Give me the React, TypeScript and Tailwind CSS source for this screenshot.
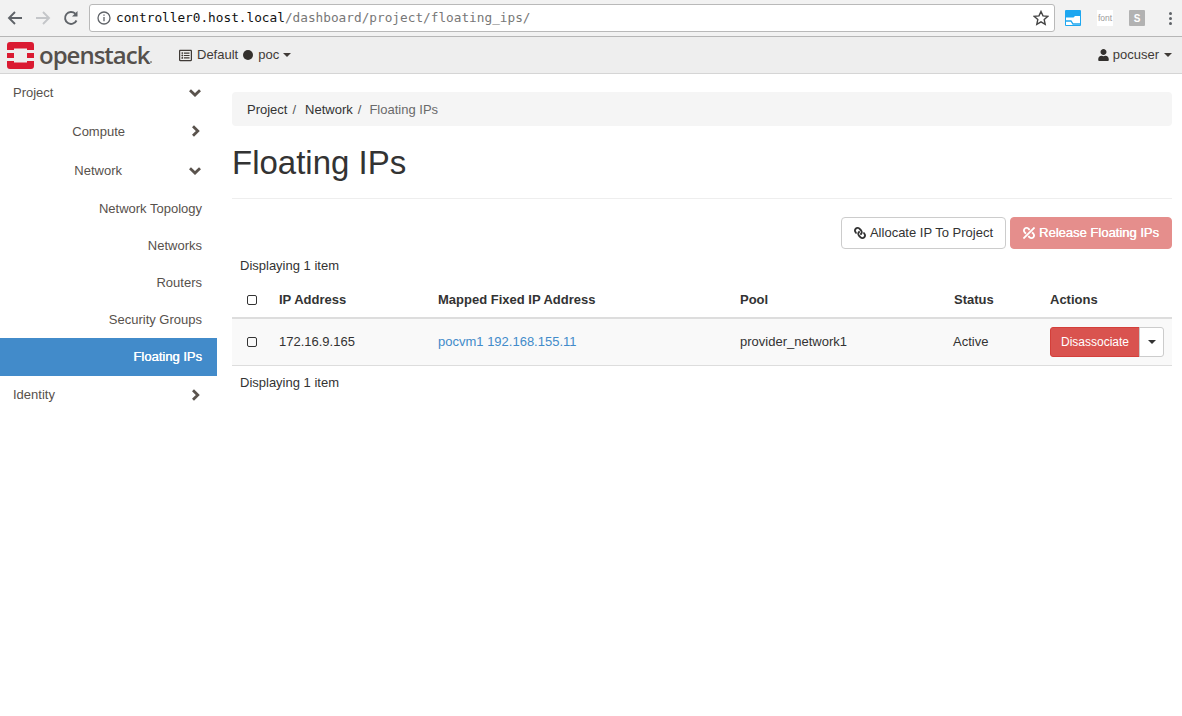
import React from "react";
import { FaLink, FaUnlink, FaUser, FaRegListAlt } from "react-icons/fa";

const sans = "font-['Liberation_Sans',Arial,sans-serif]";

function Caret({ className = "" }: { className?: string }) {
  return (
    <svg width="8" height="4" viewBox="0 0 8 4" className={className}>
      <path d="M0 0h8L4 4z" fill="currentColor" />
    </svg>
  );
}

function ChevronDown({ className = "" }: { className?: string }) {
  return (
    <svg width="14" height="14" viewBox="0 0 14 14" className={`text-[#5a534d] ${className}`}>
      <path d="M2 4.200 7 9l5-4.800" fill="none" stroke="currentColor" strokeWidth="2.800" />
    </svg>
  );
}

function ChevronRight({ className = "" }: { className?: string }) {
  return (
    <svg width="14" height="14" viewBox="0 0 14 14" className={`text-[#5a534d] ${className}`}>
      <path d="M5 2.200 9.800 7 5 11.800" fill="none" stroke="currentColor" strokeWidth="2.800" />
    </svg>
  );
}

function NavRow({ label, active }: { label: string; active?: boolean }) {
  return (
    <div
      className={`flex items-center justify-end pr-[15px] text-right text-[13px] ${
        active ? "h-[38px] bg-[#428bca] text-white [text-shadow:0.3px_0_0_#fff]" : "h-[37px] text-[#57514c]"
      }`}
    >
      {label}
    </div>
  );
}

function Check() {
  return <span className="block h-[10px] w-[10px] rounded-[2px] border-[1.5px] border-[#333]" />;
}

export default function App() {
  return (
    <div className={`flex h-[716px] w-[1182px] flex-col overflow-hidden bg-white text-[#333] ${sans}`}>
      {/* Browser chrome */}
      <div className="flex h-[37px] shrink-0 items-center border-b border-[#b6b6b6] bg-[#f2f2f2]">
        <div className="flex w-[89px] shrink-0 items-center pl-[7px] text-[#5f6368]">
          <svg width="16" height="16" viewBox="0 0 16 16" fill="none" stroke="currentColor" strokeWidth="1.9">
            <path d="M15 8H2M8 2 2 8l6 6" />
          </svg>
          <svg width="16" height="16" viewBox="0 0 16 16" fill="none" stroke="#c4c6c9" strokeWidth="1.9" className="ml-[12px]">
            <path d="M1 8h13M8 2l6 6-6 6" />
          </svg>
          <svg width="16" height="16" viewBox="0 0 16 16" fill="none" stroke="currentColor" strokeWidth="1.9" className="ml-[12px]">
            <path d="M13.500 10.500A6 6 0 1 1 12.300 3.700" />
            <path d="M14.500 1v5.500H9" fill="currentColor" stroke="none" />
          </svg>
        </div>
        <div className="flex h-[28px] w-[966px] shrink-0 items-center rounded-[3px] border border-[#b9b9b9] bg-white pl-[7px] pr-[5px]">
          <svg width="14" height="14" viewBox="0 0 14 14" fill="none" stroke="#5f6368" strokeWidth="1.300">
            <circle cx="7" cy="7" r="6" />
            <path d="M7 6v4.200M7 3.500v1.300" />
          </svg>
          <span className="ml-[5px] font-['DejaVu_Sans_Mono',monospace] text-[12.750px] text-[#777]">
            <span className="text-[#111]">controller0.host.local</span>/dashboard/project/floating_ips/
          </span>
          <svg width="16" height="16" viewBox="0 0 16 16" fill="none" stroke="#444" strokeWidth="1.400" className="ml-auto">
            <path d="m8 1.500 2 4.400 4.700.5-3.500 3.200 1 4.700L8 11.900l-4.200 2.400 1-4.700L1.300 6.400 6 5.900z" />
          </svg>
        </div>
        <div className="flex flex-1 items-center pl-[10px]">
          <svg width="16" height="16" viewBox="0 0 16 16">
            <rect width="16" height="16" rx="1" fill="#1ea7f0" />
            <path d="M1 7.500h7.500L10 6h5v9H1z" fill="#fff" />
            <path d="M1 11h5l2 3h7" fill="none" stroke="#1ea7f0" strokeWidth="1.300" />
          </svg>
          <span className="ml-[16px] flex h-[16px] w-[16px] items-center justify-center bg-white text-[8.500px] text-[#9a9a9a]">font</span>
          <span className="ml-[16px] flex h-[16px] w-[16px] items-center justify-center rounded-[1px] bg-[#b2b2b2] text-[10px] font-bold text-white">S</span>
          <span className="ml-[24px] flex flex-col gap-[2px]">
            <span className="h-[3px] w-[3px] rounded-full bg-[#5f6368]" />
            <span className="h-[3px] w-[3px] rounded-full bg-[#5f6368]" />
            <span className="h-[3px] w-[3px] rounded-full bg-[#5f6368]" />
          </span>
        </div>
      </div>

      {/* Top navbar */}
      <div className="flex h-[37px] shrink-0 items-center border-b border-[#d5d5d5] bg-[#eeeeee] text-[13px] text-[#3f3a36]">
        <div className="flex w-[179px] shrink-0 items-center pl-[7px]">
          <svg width="27" height="27" viewBox="0 0 27 27">
            <path
              fill="#da1a32"
              fillRule="evenodd"
              d="M3 0h21a3 3 0 0 1 3 3v5h-7V6.500H7V8H0V3a3 3 0 0 1 3-3zM0 11h7v5H0zm20 0h7v5h-7zM0 19h7v1.500h13V19h7v5a3 3 0 0 1-3 3H3a3 3 0 0 1-3-3z"
            />
          </svg>
          <span className="ml-[5px] font-['Open_Sans',sans-serif] text-[24px] font-semibold leading-none tracking-[-1px] text-[#55504c]">
            openstack
          </span>
          <span className="ml-px mt-[13px] h-[2px] w-[2px] rounded-full bg-[#8a8581]" />
        </div>
        <FaRegListAlt className="mr-[5px] h-[13px] w-[13px] shrink-0" />
        <span>Default</span>
        <span className="mx-[5px] h-[10px] w-[10px] rounded-full bg-[#33302d]" />
        <span>poc</span>
        <Caret className="ml-[4px]" />
        <div className="ml-auto flex items-center pr-[10px]">
          <FaUser className="mr-[4px] h-[12px] w-[11px] text-[#33302d]" />
          <span>pocuser</span>
          <Caret className="ml-[5px]" />
        </div>
      </div>

      <div className="flex min-h-0 flex-1">
        {/* Sidebar */}
        <aside className="w-[217px] shrink-0 text-[#57514c]">
          <div className="flex h-[37px] items-center justify-between pl-[13px] pr-[15px] text-[13px]">
            <span>Project</span>
            <ChevronDown />
          </div>
          <div className="flex h-[40px] items-center justify-end text-[13px]">
            <span className="mr-[63px] mt-[2px]">Compute</span>
            <ChevronRight className="mr-[15px]" />
          </div>
          <div className="flex h-[39px] items-center justify-end text-[13px]">
            <span className="mr-[66px]">Network</span>
            <ChevronDown className="mr-[15px]" />
          </div>
          <NavRow label="Network Topology" />
          <NavRow label="Networks" />
          <NavRow label="Routers" />
          <NavRow label="Security Groups" />
          <NavRow label="Floating IPs" active />
          <div className="flex h-[38px] items-center justify-between pl-[13px] pr-[15px] text-[13px]">
            <span>Identity</span>
            <ChevronRight />
          </div>
        </aside>

        {/* Main */}
        <main className="min-w-0 flex-1 pl-[15px] pr-[10px] pt-[18px]">
          <div className="flex h-[34px] items-center rounded-[4px] bg-[#f5f5f5] pl-[15px] pt-[2px] text-[13px] text-[#333]">
            <span>Project</span>
            <span className="ml-[5px] text-[#555]">/</span>
            <span className="ml-[9px]">Network</span>
            <span className="ml-[5px] text-[#555]">/</span>
            <span className="ml-[8px] text-[#6a6a6a]">Floating IPs</span>
          </div>
          <h1 className="mt-[19px] text-[33px] font-normal leading-[36px] text-[#333]">Floating IPs</h1>
          <div className="mt-[17px] border-b border-[#eeeeee]" />

          <div className="mt-[18px] flex justify-end gap-[4px] text-[13px]">
            <button className="flex h-[32px] w-[165px] items-center justify-center gap-[4px] rounded-[4px] border border-[#cccccc] bg-white text-[#333]">
              <FaLink className="h-[12px] w-[12px] -scale-x-100" />
              Allocate IP To Project
            </button>
            <button className="flex h-[32px] w-[162px] items-center justify-center gap-[4px] rounded-[4px] border border-[#e58f8c] bg-[#e58e8c] text-white [text-shadow:0.3px_0_0_#fff]">
              <FaUnlink className="h-[12px] w-[12px] -scale-x-100" />
              Release Floating IPs
            </button>
          </div>

          <div className="ml-[8px] mt-[7px] text-[13px] leading-[20px]">Displaying 1 item</div>

          <table className="mt-[6px] w-full table-fixed border-collapse text-[13px]">
            <thead>
              <tr className="h-[36px] border-b-2 border-[#dddddd] text-left font-bold">
                <th className="w-[47px] pl-[15px]"><Check /></th>
                <th className="w-[159px]">IP Address</th>
                <th className="w-[302px]">Mapped Fixed IP Address</th>
                <th className="w-[214px]">Pool</th>
                <th className="w-[96px]">Status</th>
                <th>Actions</th>
              </tr>
            </thead>
            <tbody>
              <tr className="h-[47px] border-b border-[#dddddd] bg-[#f9f9f9]">
                <td className="pl-[15px]"><Check /></td>
                <td>172.16.9.165</td>
                <td className="text-[#428bca]">pocvm1 192.168.155.11</td>
                <td>provider_network1</td>
                <td><span className="-ml-px">Active</span></td>
                <td>
                  <div className="flex items-center">
                    <button className="flex h-[30px] w-[90px] items-center justify-center rounded-l-[3px] border border-[#d43f3a] bg-[#d9534f] text-[12px] text-white">
                      Disassociate
                    </button>
                    <button className="-ml-px flex h-[30px] w-[25px] items-center justify-center rounded-r-[3px] border border-[#cccccc] bg-white text-[#333]">
                      <Caret />
                    </button>
                  </div>
                </td>
              </tr>
            </tbody>
          </table>

          <div className="ml-[8px] mt-[7px] text-[13px] leading-[20px]">Displaying 1 item</div>
        </main>
      </div>
    </div>
  );
}
